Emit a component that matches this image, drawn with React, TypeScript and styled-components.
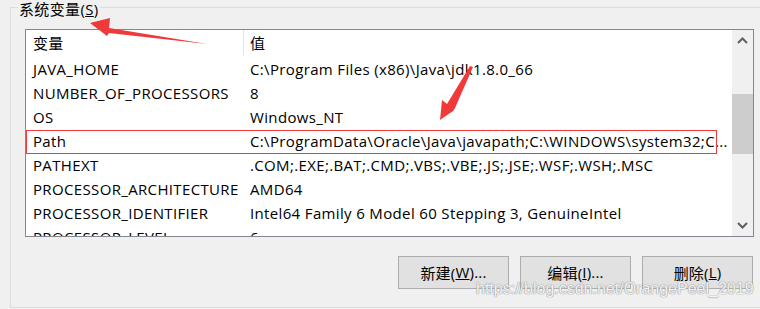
import React from "react";
import styled, { createGlobalStyle } from "styled-components";

const Global = createGlobalStyle`
  html, body { margin: 0; padding: 0; background: #f0f0f0; }
  body { font-family: "Open Sans", "Noto Sans CJK SC", sans-serif; }
`;

const Page = styled.div`
  position: relative;
  width: 760px;
  height: 309px;
  overflow: hidden;
  background: #f0f0f0;
  padding: 7px 0 0 10px;
  box-sizing: border-box;
  font-family: "Open Sans", "Noto Sans CJK SC", sans-serif;
  font-size: 15px;
  letter-spacing: 0.35px;
  color: #000;
`;

const GroupBox = styled.div`
  position: relative;
  height: 301px;
  border: 1px solid #dcdcdc;
  border-right: none;
  box-sizing: border-box;
  padding: 21px 7px 0 14px;
  display: flex;
  flex-direction: column;
`;

const Legend = styled.div`
  position: absolute;
  top: -7px;
  left: 7px;
  padding: 0 1px;
  background: #f0f0f0;
  line-height: 16px;
  white-space: nowrap;
`;

const ListBox = styled.div`
  width: 729px;
  height: 208px;
  border: 1px solid #828790;
  box-sizing: border-box;
  background: #fff;
  display: grid;
  grid-template-columns: 1fr 21px;
  overflow: hidden;
`;

const Table = styled.div`
  display: flex;
  flex-direction: column;
  overflow: hidden;
`;

const Row = styled.div<{ $head?: boolean; $marked?: boolean }>`
  position: relative;
  flex: none;
  display: grid;
  grid-template-columns: 218px 1fr;
  height: ${(p) => (p.$head ? 28 : 24)}px;
  box-sizing: border-box;

  &::after {
    content: "";
    display: ${(p) => (p.$marked ? "block" : "none")};
    position: absolute;
    left: 0;
    top: 0;
    bottom: 0;
    right: 15px;
    border: 1px solid #f03a3a;
    pointer-events: none;
  }
`;

const Cell = styled.div<{ $head?: boolean; $first?: boolean }>`
  display: flex;
  align-items: center;
  padding-left: ${(p) => (p.$first ? 7 : 6)}px;
  padding-bottom: ${(p) => (p.$head ? 1 : 2)}px;
  white-space: nowrap;
  overflow: hidden;
  border-right: ${(p) => (p.$head && p.$first ? "1px solid #e5e5e5" : "none")};
  margin-bottom: ${(p) => (p.$head ? 2 : 0)}px;
`;

const ScrollBar = styled.div`
  background: #f0f0f0;
  display: flex;
  flex-direction: column;
  align-items: center;
`;

const ArrowBtn = styled.div`
  height: 21px;
  width: 100%;
  display: flex;
  align-items: center;
  justify-content: center;
  flex: none;
`;

const Track = styled.div`
  flex: 1;
  width: 100%;
  padding-top: 43px;
  box-sizing: border-box;
`;

const Thumb = styled.div`
  width: 100%;
  height: 60px;
  background: #cdcdcd;
`;

const Buttons = styled.div`
  display: flex;
  justify-content: flex-end;
  gap: 11px;
  margin-top: 19px;
`;

const Button = styled.div`
  width: 111px;
  height: 33px;
  box-sizing: border-box;
  border: 1px solid #adadad;
  background: #e1e1e1;
  display: flex;
  align-items: center;
  justify-content: center;
  padding-bottom: 1px;
  white-space: nowrap;
  letter-spacing: 0.2px;
`;

const U = styled.span`
  text-decoration: underline;
`;

const Watermark = styled.div`
  position: absolute;
  left: 476px;
  top: 280px;
  font-family: "Liberation Sans", Arial, sans-serif;
  font-size: 16px;
  letter-spacing: 0;
  color: rgba(255, 255, 255, 0.9);
  text-shadow: 0 0 1px #999, 0 0 1px #999, 0 0 1px #aaa;
  white-space: nowrap;
  pointer-events: none;
`;

const Overlay = styled.svg`
  position: absolute;
  left: 0;
  top: 0;
  pointer-events: none;
`;

const rows: [string, string][] = [
  ["JAVA_HOME", "C:\\Program Files (x86)\\Java\\jdk1.8.0_66"],
  ["NUMBER_OF_PROCESSORS", "8"],
  ["OS", "Windows_NT"],
  ["Path", "C:\\ProgramData\\Oracle\\Java\\javapath;C:\\WINDOWS\\system32;C..."],
  ["PATHEXT", ".COM;.EXE;.BAT;.CMD;.VBS;.VBE;.JS;.JSE;.WSF;.WSH;.MSC"],
  ["PROCESSOR_ARCHITECTURE", "AMD64"],
  ["PROCESSOR_IDENTIFIER", "Intel64 Family 6 Model 60 Stepping 3, GenuineIntel"],
  ["PROCESSOR_LEVEL", "6"],
];

const Chevron = ({ up }: { up?: boolean }) => (
  <svg width="11" height="7" viewBox="0 0 11 7">
    <path
      d={up ? "M1 6 L5.5 1.5 L10 6" : "M1 1 L5.5 5.5 L10 1"}
      fill="none"
      stroke="#606060"
      strokeWidth="2"
    />
  </svg>
);

export default function App() {
  return (
    <>
      <Global />
      <Page>
        <GroupBox>
          <Legend>
            系统变量(<U>S</U>)
          </Legend>
          <ListBox>
            <Table>
              <Row $head>
                <Cell $head $first>变量</Cell>
                <Cell $head>值</Cell>
              </Row>
              {rows.map(([k, v]) => (
                <Row key={k} $marked={k === "Path"}>
                  <Cell $first>{k}</Cell>
                  <Cell>{v}</Cell>
                </Row>
              ))}
            </Table>
            <ScrollBar>
              <ArrowBtn>
                <Chevron up />
              </ArrowBtn>
              <Track>
                <Thumb />
              </Track>
              <ArrowBtn>
                <Chevron />
              </ArrowBtn>
            </ScrollBar>
          </ListBox>
          <Buttons>
            <Button>
              新建(<U>W</U>)...
            </Button>
            <Button>
              编辑(<U>I</U>)...
            </Button>
            <Button>
              删除(<U>L</U>)
            </Button>
          </Buttons>
        </GroupBox>
        <Watermark>https://blog.csdn.net/OrangePeel_2019</Watermark>
        <Overlay width="760" height="309" viewBox="0 0 760 309">
          <polygon
            points="207,44 109,33 107,36 90,23 110,18 109,28"
            fill="#f03a3a"
          />
          <polygon
            points="473,67 455,108 453,111 440,120 442,100 447,104 470,66"
            fill="#f03a3a"
          />
        </Overlay>
      </Page>
    </>
  );
}
